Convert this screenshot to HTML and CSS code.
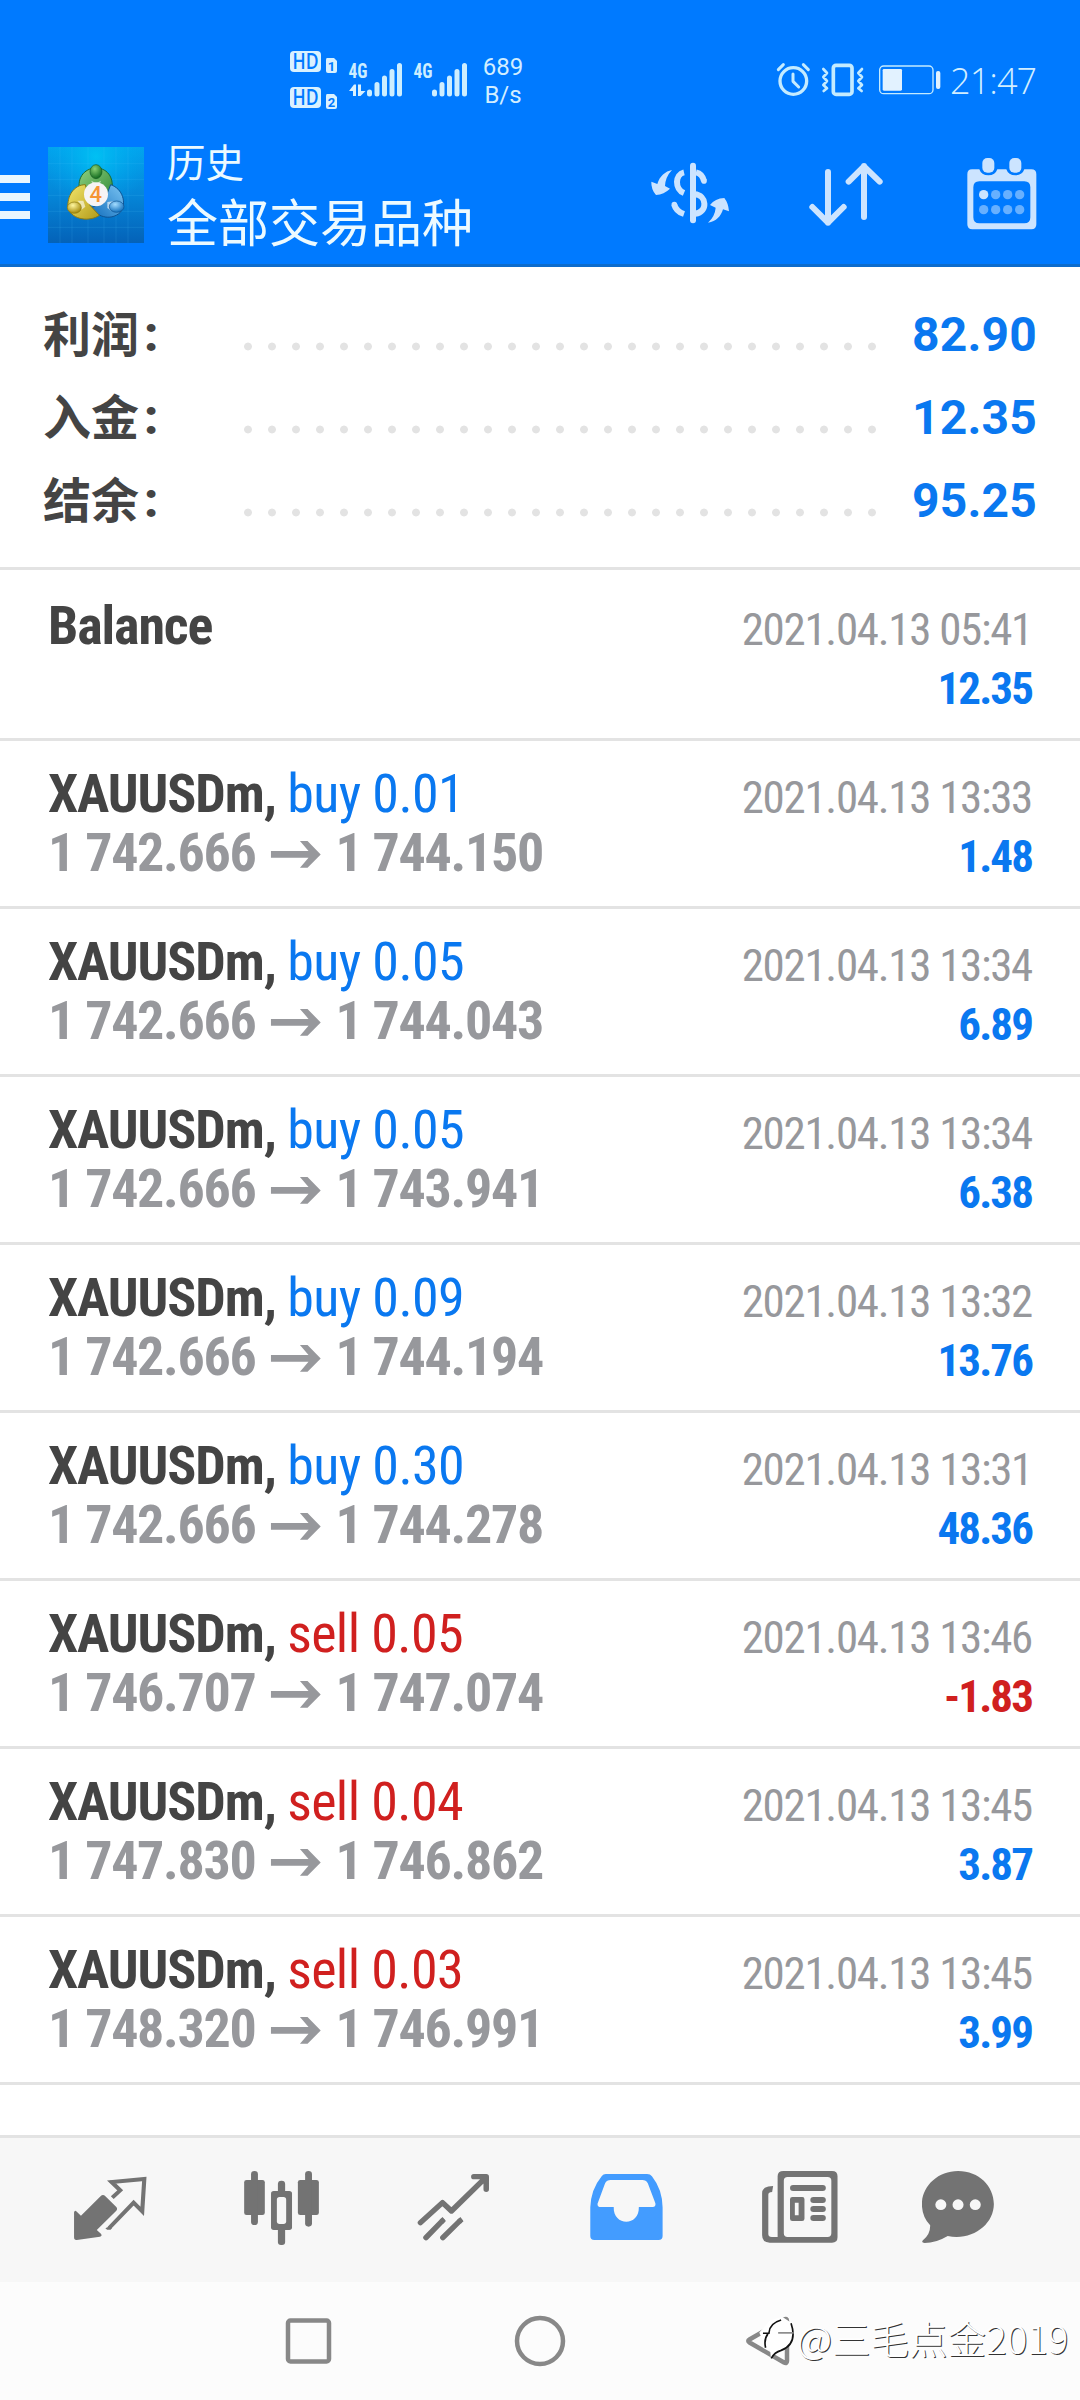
FILE: index.html
```html
<!DOCTYPE html>
<html lang="zh-CN">
<head>
<meta charset="utf-8">
<title>历史</title>
<link rel="stylesheet" href="styles.css">
</head>
<body>
<header class="header">
  <div class="status">
    <svg class="signals" viewBox="288 46 184 66" width="184" height="66">
      <g class="pale">
        <rect x="290" y="51" width="31" height="21" rx="4"/>
        <rect x="290" y="87" width="31" height="21" rx="4"/>
        <path d="M327 58h7l3 3v10q0 2-2 2h-7q-2 0-2-2V60q0-2 1-2z"/>
        <path d="M327 94h7l3 3v10q0 2-2 2h-7q-2 0-2-2V96q0-2 1-2z"/>
        <path d="M349 91l5-6.500h2V96h-3v-5zM358 84.500h3V91h4.500l-5 5H358z"/>
      </g>
      <g class="bars">
        <path d="M369.500 92v2M377 84.500V94M384.500 78V94M392 71.500V94M399.500 65.500V94"/>
        <path d="M434.500 92v2M442 84.500V94M449.500 78V94M457 71.500V94M464.500 65.500V94"/>
      </g>
      <text class="hd" x="292.500" y="69" textLength="26" lengthAdjust="spacingAndGlyphs">HD</text>
      <text class="hd" x="292.500" y="105" textLength="26" lengthAdjust="spacingAndGlyphs">HD</text>
      <text class="sim" x="331.500" y="71" text-anchor="middle">1</text>
      <text class="sim" x="331.500" y="107" text-anchor="middle">2</text>
      <text class="net" x="348.500" y="77.500" textLength="19" lengthAdjust="spacingAndGlyphs">4G</text>
      <text class="net" x="413.500" y="77.500" textLength="19" lengthAdjust="spacingAndGlyphs">4G</text>
    </svg>
    <div class="speed"><span>689</span><span>B/s</span></div>
    <svg class="indicators" viewBox="40 65 504 108" width="168" height="36">
      <g class="line">
        <circle cx="98" cy="122" r="40" stroke-width="10"/>
        <path d="M97 101v22l17 17" stroke-width="9"/>
        <path d="M53 88l15-15M128 73l15 15" stroke-width="9"/>
        <rect x="218" y="75" width="56" height="87" rx="8" stroke-width="11"/>
        <path d="M188 86l11 12-11 12 11 12-11 12 11 10-10 8M304 86l-11 12 11 12-11 12 11 12-11 10 10 8" stroke-width="8"/>
        <rect x="357" y="77" width="160" height="83" rx="12" stroke-width="4"/>
      </g>
      <rect class="charge" x="366" y="86" width="58" height="65" rx="4"/>
      <rect class="charge" x="526" y="92" width="13" height="54" rx="6"/>
    </svg>
    <span class="clock">21:47</span>
  </div>
  <div class="toolbar">
    <div class="menu"><i></i><i></i><i></i></div>
    <svg class="logo" viewBox="24 21 288 288" width="96" height="96">
      <defs>
        <linearGradient id="sky" x1="0" y1="0" x2="0" y2="1"><stop offset="0" stop-color="#02a4ed"/><stop offset=".5" stop-color="#0586d8"/><stop offset="1" stop-color="#0462b8"/></linearGradient>
        <radialGradient id="glow" cx=".5" cy=".1" r=".55"><stop offset="0" stop-color="#00c4f4" stop-opacity=".9"/><stop offset="1" stop-color="#00a8f0" stop-opacity="0"/></radialGradient>
        <linearGradient id="green" x1="0" y1="0" x2="1" y2="1"><stop offset="0" stop-color="#8fd080"/><stop offset="1" stop-color="#2c8733"/></linearGradient>
        <linearGradient id="gold" x1="0" y1="0" x2="1" y2="1"><stop offset="0" stop-color="#f3e66c"/><stop offset="1" stop-color="#b39b19"/></linearGradient>
        <linearGradient id="azure" x1="1" y1="0" x2="0" y2="1"><stop offset="0" stop-color="#7cc5f3"/><stop offset="1" stop-color="#126ebd"/></linearGradient>
        <radialGradient id="gball" cx=".4" cy=".3" r=".7"><stop offset="0" stop-color="#8bd174"/><stop offset="1" stop-color="#126b1f"/></radialGradient>
        <radialGradient id="yball" cx=".4" cy=".3" r=".7"><stop offset="0" stop-color="#fff7a0"/><stop offset="1" stop-color="#a38808"/></radialGradient>
        <radialGradient id="bball" cx=".4" cy=".3" r=".7"><stop offset="0" stop-color="#a4dcff"/><stop offset="1" stop-color="#1270bd"/></radialGradient>
      </defs>
      <rect x="24" y="21" width="288" height="288" fill="url(#sky)"/>
      <rect x="24" y="21" width="288" height="288" fill="url(#glow)"/>
      <path d="M60 21v288M96 21v288M144 21v288M192 21v288M228 21v288M264 21v288M24 71h288M24 118h288M24 166h288M24 214h288M24 262h288" stroke="#5cc8ff" stroke-opacity=".22" stroke-width="2"/>
      <path d="M122 160C106 118 132 84 168 84S230 118 210 172L190 190 145 150z" fill="url(#green)" stroke="#1c6b2e" stroke-width="3"/>
      <path d="M212 134C248 146 262 190 240 218C216 240 174 236 156 202L190 190z" fill="url(#azure)" stroke="#0e5393" stroke-width="3"/>
      <path d="M136 134C102 134 80 168 84 206C98 240 150 246 178 226L150 196z" fill="url(#gold)" stroke="#8c7a12" stroke-width="3"/>
      <path d="M154 122l14 8 15-8-6 16h-18zM112 182l18 0 6 18-12 10-2-18zM222 184l-20 2 0 18 12 8 2-18z" fill="#fff" fill-opacity=".6"/>
      <ellipse cx="168" cy="95" rx="18" ry="21" fill="url(#gball)" stroke="#185c22" stroke-width="2"/>
      <ellipse cx="103" cy="203" rx="21" ry="17" fill="url(#yball)" stroke="#8c7a12" stroke-width="2"/>
      <ellipse cx="230" cy="200" rx="22" ry="17" fill="url(#bball)" stroke="#0e5393" stroke-width="2"/>
      <circle cx="168" cy="163" r="36" fill="#f6f4f5"/>
      <text class="four" x="167" y="186" text-anchor="middle">4</text>
    </svg>
    <div class="titles"><span class="small-title">历史</span><span class="big-title">全部交易品种</span></div>
    <svg class="tool" viewBox="90 60 240 204" width="80" height="68">
      <g fill="none" stroke="#cce4ff">
        <path d="M219 77V241" stroke-width="18" stroke-linecap="round"/>
        <path d="M192 97C165 103 163 147 192 159M192 222Q168 214 163 194" stroke-width="18"/>
        <path d="M228 97Q247 101 252 123M224 163C260 165 265 216 226 221" stroke-width="18"/>
        <circle cx="252" cy="123" r="4" stroke-width="9"/><circle cx="163" cy="194" r="4" stroke-width="9"/>
      </g>
      <path d="M156 90C136 94 119 108 112 132L94 125Q93 148 108 165Q132 163 150 146L135 138Q136 111 156 90zM264 248Q285 229 287 203L270 195Q285 175 313 174Q325 189 327 214L309 208C303 228 289 245 264 248z" fill="#cce4ff"/>
    </svg>
    <svg class="tool sort" viewBox="564 60 228 204" width="76" height="68">
      <path d="M624 96V248M577 201L624 248L671 201M732 231V78M686 125L732 79L779 125" fill="none" stroke="#cce4ff" stroke-width="18" stroke-linecap="round" stroke-linejoin="round"/>
    </svg>
    <svg class="tool" viewBox="1040 50 216 222" width="72" height="74">
      <path fill-rule="evenodd" fill="#cce4ff" d="M1058 87H1080Q1086 105 1107 105T1134 87H1161Q1167 105 1188 105T1215 87H1236Q1251 87 1251 102V252Q1251 267 1236 267H1059Q1044 267 1044 252V102Q1044 87 1058 87zM1080 123Q1062 123 1062 141V231Q1062 249 1080 249H1215Q1233 249 1233 231V141Q1233 123 1215 123z"/>
      <rect x="1089" y="53" width="36" height="44" rx="15" fill="#cce4ff"/><rect x="1170" y="53" width="36" height="44" rx="15" fill="#cce4ff"/>
      <circle cx="1093" cy="163" r="14" fill="#cce4ff"/>
      <g fill="#67b0ff"><circle cx="1129" cy="163" r="14"/><circle cx="1165" cy="163" r="14"/><circle cx="1201" cy="163" r="14"/><circle cx="1093" cy="208" r="14"/><circle cx="1129" cy="208" r="14"/><circle cx="1165" cy="208" r="14"/><circle cx="1201" cy="208" r="14"/></g>
    </svg>
  </div>
</header>

<section class="summary">
  <div class="sum"><span class="label"><span>利润</span><b>:</b></span><span class="dots"></span><span class="total">82.90</span></div>
  <div class="sum"><span class="label"><span>入金</span><b>:</b></span><span class="dots"></span><span class="total">12.35</span></div>
  <div class="sum"><span class="label"><span>结余</span><b>:</b></span><span class="dots"></span><span class="total">95.25</span></div>
</section>

<svg class="defs" width="0" height="0"><symbol id="arrow" viewBox="698 294 152 88"><path d="M698 327H812L786 297H809L849 338L809 378H786L812 348H698z"/></symbol></svg>
<main class="list">
  <article class="row balance"><div class="deal"><span class="name">Balance</span></div><div class="result"><time>2021.04.13 05:41</time><b class="gain">12.35</b></div></article>
  <article class="row"><div class="deal"><span class="name">XAUUSDm, <em class="buy">buy 0.01</em></span><span class="price">1 742.666<svg class="to"><use href="#arrow"/></svg>1 744.150</span></div><div class="result"><time>2021.04.13 13:33</time><b class="gain">1.48</b></div></article>
  <article class="row"><div class="deal"><span class="name">XAUUSDm, <em class="buy">buy 0.05</em></span><span class="price">1 742.666<svg class="to"><use href="#arrow"/></svg>1 744.043</span></div><div class="result"><time>2021.04.13 13:34</time><b class="gain">6.89</b></div></article>
  <article class="row"><div class="deal"><span class="name">XAUUSDm, <em class="buy">buy 0.05</em></span><span class="price">1 742.666<svg class="to"><use href="#arrow"/></svg>1 743.941</span></div><div class="result"><time>2021.04.13 13:34</time><b class="gain">6.38</b></div></article>
  <article class="row"><div class="deal"><span class="name">XAUUSDm, <em class="buy">buy 0.09</em></span><span class="price">1 742.666<svg class="to"><use href="#arrow"/></svg>1 744.194</span></div><div class="result"><time>2021.04.13 13:32</time><b class="gain">13.76</b></div></article>
  <article class="row"><div class="deal"><span class="name">XAUUSDm, <em class="buy">buy 0.30</em></span><span class="price">1 742.666<svg class="to"><use href="#arrow"/></svg>1 744.278</span></div><div class="result"><time>2021.04.13 13:31</time><b class="gain">48.36</b></div></article>
  <article class="row"><div class="deal"><span class="name">XAUUSDm, <em class="sell">sell 0.05</em></span><span class="price">1 746.707<svg class="to"><use href="#arrow"/></svg>1 747.074</span></div><div class="result"><time>2021.04.13 13:46</time><b class="loss">-1.83</b></div></article>
  <article class="row"><div class="deal"><span class="name">XAUUSDm, <em class="sell">sell 0.04</em></span><span class="price">1 747.830<svg class="to"><use href="#arrow"/></svg>1 746.862</span></div><div class="result"><time>2021.04.13 13:45</time><b class="gain">3.87</b></div></article>
  <article class="row"><div class="deal"><span class="name">XAUUSDm, <em class="sell">sell 0.03</em></span><span class="price">1 748.320<svg class="to"><use href="#arrow"/></svg>1 746.991</span></div><div class="result"><time>2021.04.13 13:45</time><b class="gain">3.99</b></div></article>
</main>

<nav class="tabs">
  <svg viewBox="180 306 278.800 288" preserveAspectRatio="none"><path d="M215 457Q217 448 223 455L235 467L292 409Q299 401 306 409L337 440Q343 446 337 453L281 510L293 521Q298 528 290 530L223 540Q215 541 215 532z"/><path d="M326 413L349 391L324 366L419 357L413 454L388 428L317 504" fill="none" stroke="#737373" stroke-width="12"/><path d="M323 360a6 6 0 0 0 0 11zM306 505l9-5 10 5-4 4h-10z"/></svg>
  <svg viewBox="679.500 306 278.800 288" preserveAspectRatio="none"><rect x="709" y="360" width="60" height="105" rx="7"/><rect x="729" y="333" width="20" height="162" rx="10"/><rect x="865" y="360" width="61" height="105" rx="7"/><rect x="886" y="333" width="20" height="167" rx="10"/><rect x="807" y="362" width="21" height="40" rx="10"/><rect x="807" y="500" width="21" height="55" rx="9"/><rect x="787" y="393" width="61" height="117" rx="8"/><rect x="804" y="411" width="27" height="81" rx="8" fill="#f7f7f7"/></svg>
  <svg viewBox="1179 306 278.800 288" preserveAspectRatio="none"><g fill="none" stroke="#737373" stroke-width="16" stroke-linecap="round" stroke-linejoin="round"><path d="M1221 488L1285 428L1311 453L1408 355M1376 350H1412V388"/><path d="M1237 533L1284 483M1286 533L1335 483"/></g><path d="M1277 479l8-8 10 12-8 8zM1328 479l9-8 9 13-8 7z"/></svg>
  <svg class="active" viewBox="110.300 306 278.800 288" preserveAspectRatio="none"><path fill-rule="evenodd" d="M191 342H311Q320 342 325 349Q355 388 356 442V528Q356 540 344 540H158Q146 540 146 528V442Q148 388 179 349Q184 342 191 342zM205 360Q194 360 189 370L167 431Q166 441 177 441H214C212 500 289 500 287 441H327Q337 441 335 430L313 370Q308 360 297 360z"/></svg>
  <svg viewBox="609.800 306 278.800 288" preserveAspectRatio="none"><path fill-rule="evenodd" d="M707 333H848Q864 333 864 349V532Q864 548 848 548H667Q645 548 645 526V400Q645 378 677 378L674 396Q663 396 663 404V522Q663 531 673 531H690V349Q690 333 707 333zM719 351Q708 351 708 362V520Q708 531 719 531H835Q846 531 846 520V362Q846 351 835 351z"/><rect x="726" y="375" width="104" height="18" rx="9"/><path fill-rule="evenodd" d="M733 411H762Q768 411 768 418V476Q768 483 761 483H733Q726 483 726 476V418Q726 411 733 411zM740 428V466H751V428z"/><rect x="785" y="411" width="45" height="18" rx="9"/><rect x="785" y="438" width="45" height="18" rx="9"/><rect x="785" y="465" width="45" height="18" rx="9"/></svg>
  <svg viewBox="1109.300 306 278.800 288" preserveAspectRatio="none"><path d="M1214 333C1275 333 1318 379 1318 432C1318 494 1255 543 1184 528Q1150 549 1117 549Q1106 548 1112 541Q1134 523 1133 496Q1109 471 1109 432C1109 380 1154 333 1214 333z"/><g fill="#f7f7f7"><circle cx="1164" cy="434" r="16"/><circle cx="1214" cy="434" r="16"/><circle cx="1264" cy="434" r="16"/></g></svg>
</nav>

<footer class="sysnav">
  <svg viewBox="0 0 60 60"><rect x="9" y="9.500" width="41" height="41" rx="2.500"/></svg>
  <svg viewBox="0 0 60 60"><circle cx="30" cy="30" r="23"/></svg>
  <svg viewBox="0 0 60 60"><path d="M43 8.500Q46 7 46 10V50Q46 53 43 51.500L8.500 31.500Q6 30 8.500 28.500z"/></svg>
  <div class="watermark">
    <svg viewBox="55 90 115 130" width="38" height="43"><path d="M59 140L92 103L128 92L158 112L166 148L153 178L110 200L94 219L92 194L78 186L72 172z" fill="#fff"/><path d="M70 142H88Q89 112 125 102M85 144Q72 160 78 186M155 112Q176 174 125 194Q105 200 95 218" fill="none" stroke="#111" stroke-width="5"/><path d="M116 141H163" stroke="#888" stroke-width="5"/></svg>
    <span>@三毛点金2019</span>
  </div>
</footer>
</body>
</html>
```
FILE: styles.css
```css
* { box-sizing: border-box; }
body { margin: 0; width: 1080px; height: 2400px; overflow: hidden; background: #fff; font-family: Roboto, "Noto Sans CJK SC", sans-serif; display: flex; flex-direction: column; }
svg { display: block; flex: none; }
.defs { position: absolute; }

.header { height: 267px; flex: none; background: #007aff; border-bottom: 3px solid #0d6ccc; }
.status { height: 140px; display: flex; align-items: flex-start; padding: 46px 0 0 288px; color: #d2eeff; }
.pale { fill: #d9f1ff; }
.bars { fill: none; stroke: #cdeeff; stroke-width: 5; stroke-linecap: round; }
.hd { font: 600 21px "Open Sans", sans-serif; fill: #007aff; }
.sim { font: 700 13px Roboto, sans-serif; fill: #007aff; }
.net { font: 700 20px Roboto, sans-serif; font-stretch: 75%; fill: #cdeeff; }
.speed { width: 62px; display: flex; flex-direction: column; align-items: center; font-size: 24px; line-height: 28px; padding-top: 7px; margin-left: 0; }
.indicators { margin: 16px 0 0 240px; }
.line { fill: none; stroke: #c4ebff; stroke-linecap: round; stroke-linejoin: round; }
.charge { fill: #e2f2ff; }
.clock { font: 300 36px/50px "Open Sans", sans-serif; letter-spacing: -.9px; margin: 10px 0 0 8px; }

.toolbar { height: 124px; display: flex; align-items: flex-start; }
.menu { width: 30px; display: flex; flex-direction: column; gap: 10px; padding-top: 35px; }
.menu i { height: 8px; background: #e9f6ff; }
.logo { margin: 7px 0 0 18px; }
.four { font: 500 66px Roboto, sans-serif; fill: #f59535; }
.titles { width: 481px; padding-left: 23px; display: flex; flex-direction: column; color: #ecfaff; }
.small-title { font-size: 38.500px; line-height: 47px; }
.big-title { font-size: 51px; line-height: 76px; }
.tool { margin-top: 20px; margin-left: 25px; }
.tool.sort { margin-left: 78px; }
.tool.sort + .tool { margin: 17px 0 0 82px; }

.summary { height: 303px; flex: none; padding: 26px 43px 0 42px; border-bottom: 3px solid #e3e3e3; }
.sum { height: 83px; display: flex; align-items: flex-start; line-height: 83px; font-size: 48px; font-weight: 700; }
.label { width: 194px; display: flex; color: #444; }
.label span { padding-top: 1px; padding-left: 1px; }
.label b { padding-left: 5px; }
.dots { width: 648px; height: 83px; background: radial-gradient(circle at 12px 53.500px, #e3e3e3 3.500px, transparent 4.300px) 0 0 / 24px 83px repeat-x; }
.total { flex: 1; text-align: right; color: #0a78f0; letter-spacing: .2px; }

.list { flex: none; font-stretch: 75%; }
.row { height: 168px; display: flex; justify-content: space-between; padding: 23px 48px 0; border-bottom: 3px solid #e3e3e3; }
.row.balance { height: 171px; padding-top: 26px; }
.deal { display: flex; flex-direction: column; font-size: 54px; line-height: 59px; font-weight: 700; color: #444; letter-spacing: -1.1px; }
.deal em { font-style: normal; font-weight: 400; letter-spacing: -.6px; }
.buy, .gain { color: #0a78f0; }
.sell, .loss { color: #d0201f; }
.price { display: flex; color: #97989c; letter-spacing: -1.3px; }
.to { width: 52px; height: 29px; margin: 17px 13px 0 15px; fill: #97989c; }
.result { display: flex; flex-direction: column; align-items: flex-end; padding-top: 4px; font-size: 45px; line-height: 59px; }
.result time { color: #97989c; letter-spacing: -1.3px; }
.result b { letter-spacing: -1.900px; }

.tabs { height: 147px; flex: none; margin-top: 50px; border-top: 3px solid #e3e3e3; background: #f7f7f7; padding: 0 24px; display: flex; align-items: center; justify-content: space-around; fill: #737373; }
.tabs svg { width: 96px; height: 96px; }
.tabs .active { fill: #439cff; }

.sysnav { position: relative; flex: 1; background: #fcfcfc; display: flex; align-items: center; justify-content: center; gap: 171px; fill: none; stroke: #888; stroke-width: 4.500; }
.sysnav > svg { width: 60px; height: 60px; }
.watermark { position: absolute; left: 758px; top: 30px; height: 50px; display: flex; align-items: center; gap: 1px; stroke: none; }
.watermark span { white-space: nowrap; font: 300 38.500px/50px "Noto Sans CJK SC", sans-serif; color: #fff; text-shadow: 1px 1px 0 #333; }
```
